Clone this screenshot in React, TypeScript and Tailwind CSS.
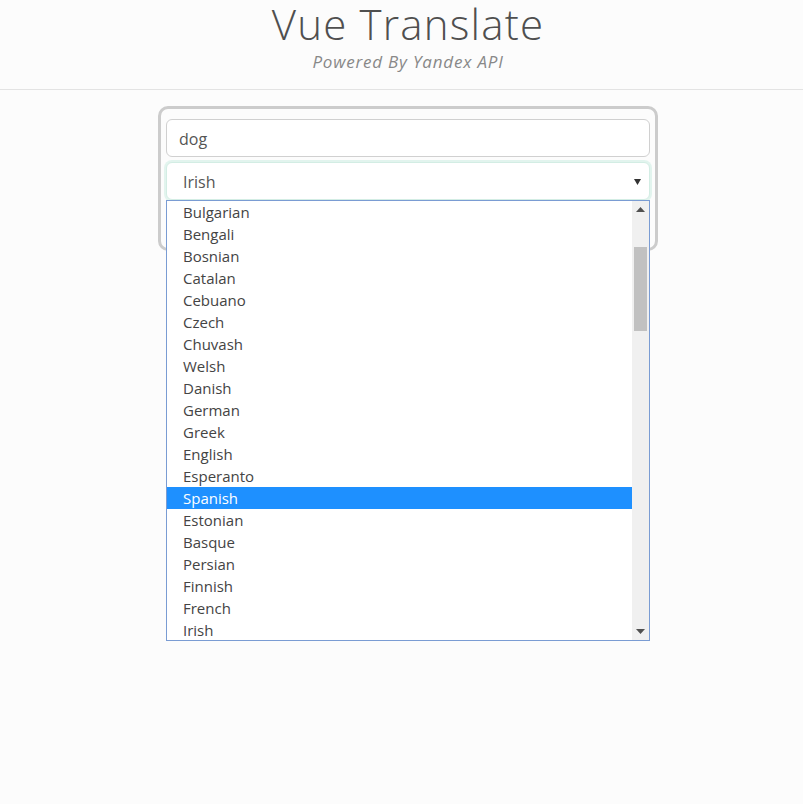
import React from "react";

const langs = [
  "Bulgarian","Bengali","Bosnian","Catalan","Cebuano","Czech","Chuvash","Welsh","Danish","German",
  "Greek","English","Esperanto","Spanish","Estonian","Basque","Persian","Finnish","French","Irish",
];

export default function App() {
  return (
    <div className="min-h-[804px] w-full bg-[#fcfcfc] text-[#555]" style={{ fontFamily: '"Open Sans", sans-serif' }}>
      <header className="h-[90px] border-b border-[#e3e3e3] pl-[13px] pt-[2px] text-center">
        <h1 className="text-[42px] font-light leading-[44px] tracking-[1.2px] text-[#4f4f4f]">Vue Translate</h1>
        <p className="mt-[5px] text-[17px] italic leading-[22px] tracking-[0.8px] text-[#888]">Powered By Yandex API</p>
      </header>
      <div className="relative ml-[158px] mt-[16px] h-[145px] w-[500px] rounded-[10px] border-[3px] border-[#cccccc] px-[5px] pt-[10px]">
        <div className="flex h-[38px] items-center rounded-[6px] border border-[#d0d0d0] bg-white px-[12px] pt-[2px] text-[16px] text-[#555]">dog</div>
        <div className="relative mt-[5px] flex h-[38px] items-center rounded-[6px] border border-[#d3ede4] bg-white pl-[16px] pt-[2px] text-[16px] text-[#555] ring-2 ring-[#e2f4ee]">
          Irish
          <svg className="absolute right-[7px] top-[16px]" width="8" height="7" viewBox="0 0 8 7">
            <path d="M0 0 H7 L3.5 6 Z" fill="#333" />
          </svg>
        </div>
        <div className="absolute left-[5px] top-[91px] z-10 flex h-[441px] w-[484px] border border-[#7a9cd3] bg-white">
          <ul className="flex-1 text-[15px] text-[#444]">
            {langs.map((l) => (
              <li
                key={l}
                className={
                  "flex h-[22px] items-center pl-[16px] " +
                  (l === "Spanish" ? "bg-[#1e90ff] text-white" : "")
                }
              >
                {l}
              </li>
            ))}
          </ul>
          <div className="relative w-[17px] bg-[#f0f0f0]">
            <svg className="absolute left-[4px] top-[6px]" width="9" height="5" viewBox="0 0 9 5">
              <path d="M0 5 L4.5 0 L9 5 Z" fill="#505050" />
            </svg>
            <div className="absolute left-[2px] top-[46px] h-[84px] w-[13px] bg-[#c1c1c1]" />
            <svg className="absolute bottom-[6px] left-[4px]" width="9" height="5" viewBox="0 0 9 5">
              <path d="M0 0 L9 0 L4.5 5 Z" fill="#505050" />
            </svg>
          </div>
        </div>
      </div>
    </div>
  );
}
